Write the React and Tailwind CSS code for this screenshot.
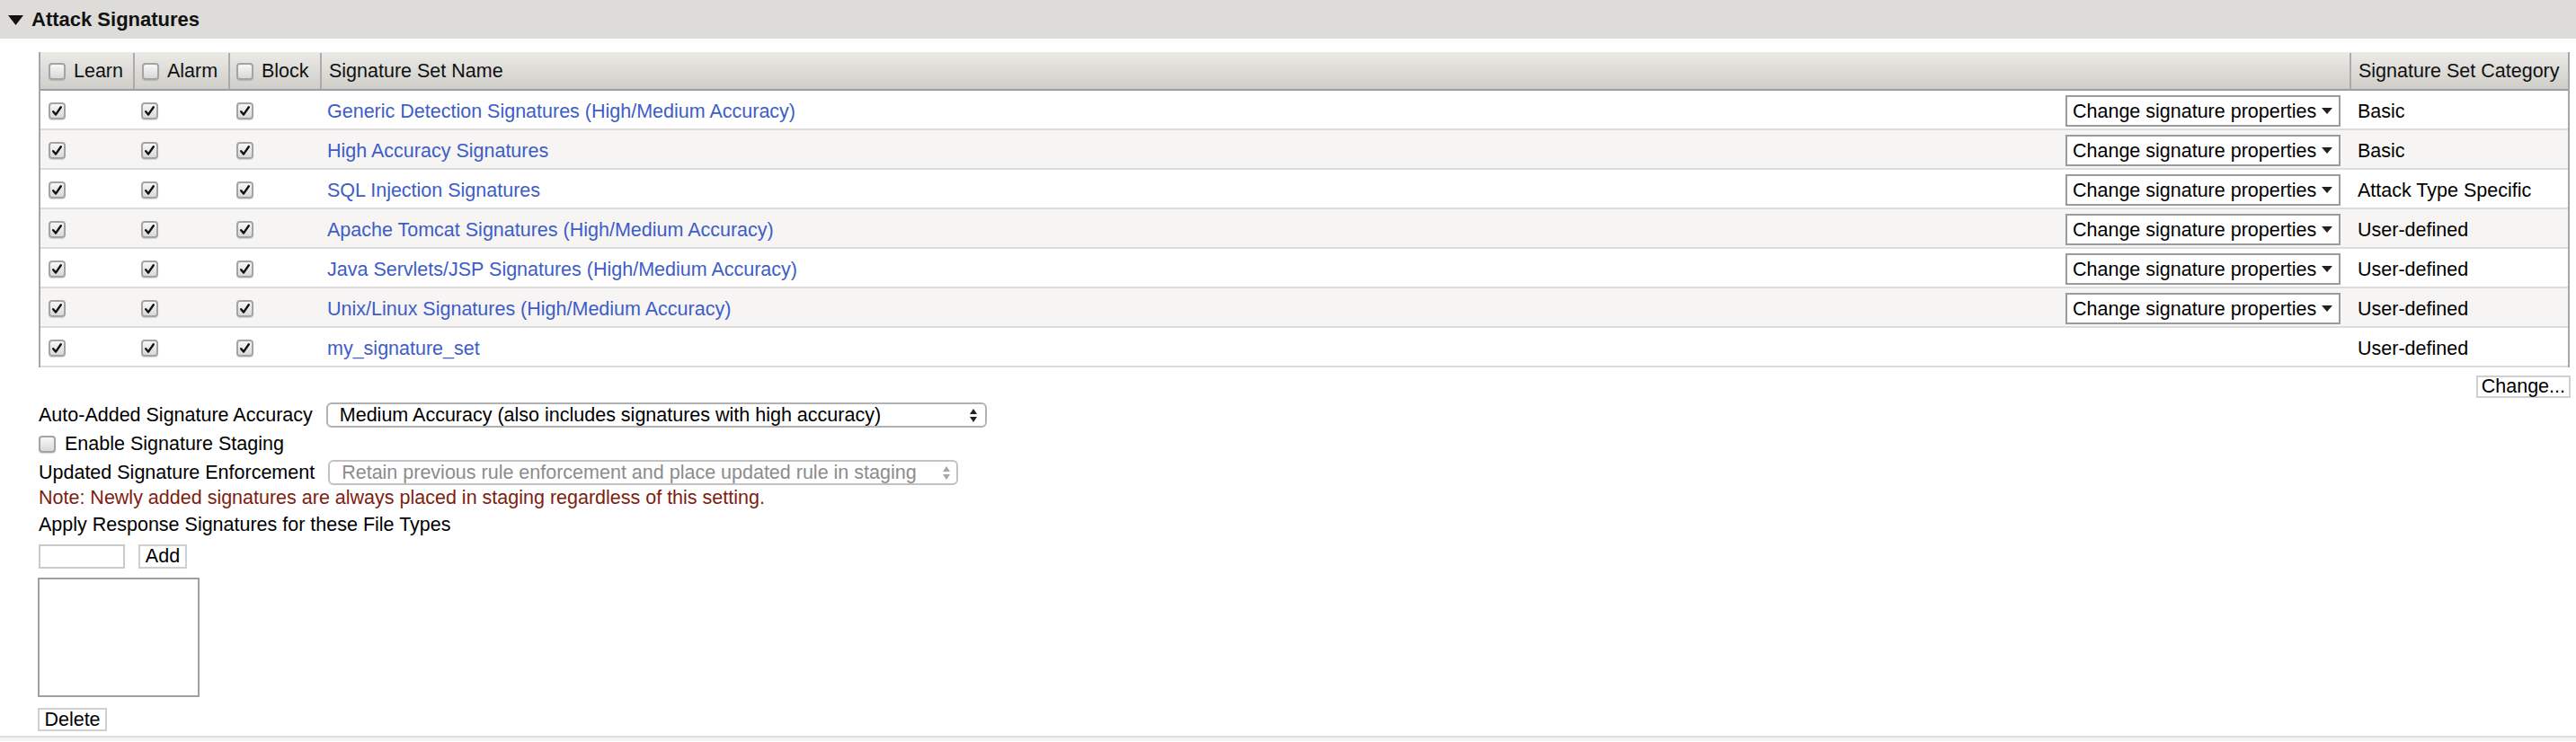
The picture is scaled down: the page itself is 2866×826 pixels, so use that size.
import React from 'react'

const rows = [
  { name: 'Generic Detection Signatures (High/Medium Accuracy)', category: 'Basic', menu: true },
  { name: 'High Accuracy Signatures', category: 'Basic', menu: true },
  { name: 'SQL Injection Signatures', category: 'Attack Type Specific', menu: true },
  { name: 'Apache Tomcat Signatures (High/Medium Accuracy)', category: 'User-defined', menu: true },
  { name: 'Java Servlets/JSP Signatures (High/Medium Accuracy)', category: 'User-defined', menu: true },
  { name: 'Unix/Linux Signatures (High/Medium Accuracy)', category: 'User-defined', menu: true },
  { name: 'my_signature_set', category: 'User-defined', menu: false },
]

function Check({ checked }) {
  return (
    <span className="inline-flex w-[19px] h-[19px] shrink-0 items-center justify-center rounded-[4px] border-2 border-[#a4a4a4] bg-linear-to-b from-[#f7f7f7] to-[#d9d9d9] shadow-[0_1px_1px_rgba(0,0,0,0.15)]">
      {checked && (
        <svg width="13" height="13" viewBox="0 0 13 13">
          <path d="M2.2 7.2 L5 10.6 L10.8 2.2" fill="none" stroke="#111" strokeWidth="2.4" strokeLinecap="round" strokeLinejoin="round" />
        </svg>
      )}
    </span>
  )
}

function UpDown({ color }) {
  return (
    <svg width="10" height="17" viewBox="0 0 10 17">
      <path d="M5 1 L9 7 L1 7 Z" fill={color} />
      <path d="M1 10 L9 10 L5 16 Z" fill={color} />
    </svg>
  )
}

function Btn({ children, className = '' }) {
  return (
    <button className={`bg-white border-2 border-[#cfcfcf] text-black leading-[21px] whitespace-nowrap ${className}`}>
      {children}
    </button>
  )
}

export default function App() {
  return (
    <div className="min-h-[826px] bg-white text-black text-[21.5px] leading-[26px] whitespace-nowrap font-['Liberation_Sans',Arial,sans-serif]">
      {/* section header */}
      <div className="h-[43px] bg-[#dddcd8] flex items-center pl-[9px] pt-[1px]">
        <svg width="17" height="11" viewBox="0 0 17 11" className="mr-[9px]">
          <path d="M0 0 L17 0 L8.5 11 Z" fill="#111" />
        </svg>
        <span className="font-bold text-[#111] text-[22px]">Attack Signatures</span>
      </div>

      {/* signature sets table */}
      <div className="pl-[43px] pr-[7px] mt-[15px]">
        <div className="border-l-2 border-r-2 border-[#a6a6a6]">
          <div className="grid grid-cols-[105px_106px_102px_2258px_1fr] h-[43px] pt-[1px] bg-linear-to-b from-[#ebeae6] to-[#cfcec9] border-b-2 border-[#9e9e9e] text-[#111]">
            <div className="flex items-center gap-[9px] pl-[9px] border-r-2 border-[#ababab]"><Check /> Learn</div>
            <div className="flex items-center gap-[9px] pl-[8px] border-r-2 border-[#ababab]"><Check /> Alarm</div>
            <div className="flex items-center gap-[9px] pl-[7px] border-r-2 border-[#ababab]"><Check /> Block</div>
            <div className="flex items-center pl-[8px] border-r-2 border-[#ababab]">Signature Set Name</div>
            <div className="flex items-center pl-[8px]">Signature Set Category</div>
          </div>
          {rows.map((r, i) => (
            <div key={r.name} className={`grid grid-cols-[105px_106px_102px_2258px_1fr] h-[44px] pt-[3px] border-b-2 border-[#dcdcdc] ${i % 2 ? 'bg-[#f6f5f3]' : 'bg-white'}`}>
              <div className="flex items-center pl-[9px]"><Check checked /></div>
              <div className="flex items-center pl-[7px]"><Check checked /></div>
              <div className="flex items-center pl-[7px]"><Check checked /></div>
              <div className="flex items-center justify-between pl-[6px] pr-[12px]">
                <span className="text-[#3d5dc8]">{r.name}</span>
                {r.menu && (
                  <div className="w-[306px] h-[35px] border-2 border-[#9b9b9b] bg-white flex items-center pl-[6px] pr-[7px] justify-between">
                    <span>Change signature properties</span>
                    <svg width="12" height="7" viewBox="0 0 12 7">
                      <path d="M0 0 L12 0 L6 7 Z" fill="#222" />
                    </svg>
                  </div>
                )}
              </div>
              <div className="flex items-center pl-[7px]">{r.category}</div>
            </div>
          ))}
        </div>
        <div className="flex justify-end mt-[9px] -mr-[1px]">
          <Btn className="h-[25px] px-[4px]">Change...</Btn>
        </div>
      </div>

      {/* settings */}
      <div className="pl-[43px]">
        <div className="flex items-center h-[28px] mt-[5px]">
          <span>Auto-Added Signature Accuracy</span>
          <div className="ml-[15px] w-[735px] h-[28px] rounded-[6px] border-2 border-[#b2b2b2] flex items-center justify-between pl-[13px] pr-[8px]">
            <span>Medium Accuracy (also includes signatures with high accuracy)</span>
            <UpDown color="#222" />
          </div>
        </div>
        <div className="flex items-center h-[20px] mt-[8px] gap-[10px]">
          <Check />
          <span>Enable Signature Staging</span>
        </div>
        <div className="flex items-center h-[28px] mt-[8px]">
          <span>Updated Signature Enforcement</span>
          <div className="ml-[15px] w-[701px] h-[28px] rounded-[6px] border-2 border-[#c2c2c2] flex items-center justify-between pl-[13px] pr-[6px]">
            <span className="text-[#8c8c8c]">Retain previous rule enforcement and place updated rule in staging</span>
            <UpDown color="#a6a6a6" />
          </div>
        </div>
        <div className="h-[26px] mt-[1px] text-[#7f1d10]">Note: Newly added signatures are always placed in staging regardless of this setting.</div>
        <div className="h-[26px] mt-[4px]">Apply Response Signatures for these File Types</div>
        <div className="flex items-center h-[27px] mt-[9px] gap-[15px]">
          <input className="w-[96px] h-[27px] border-2 border-[#c9c9c9] bg-white outline-none" />
          <Btn className="w-[54px] h-[27px]">Add</Btn>
        </div>
        <div className="w-[180px] h-[133px] mt-[10px] -ml-[1px] border-2 border-[#a0a0a0] bg-white" />
        <Btn className="mt-[12px] -ml-[1px] h-[26px] w-[77px]">Delete</Btn>
      </div>
      <div className="mt-[5px] border-t-2 border-[#dedede] h-[6px] bg-[#f4f4f2]" />
    </div>
  )
}
